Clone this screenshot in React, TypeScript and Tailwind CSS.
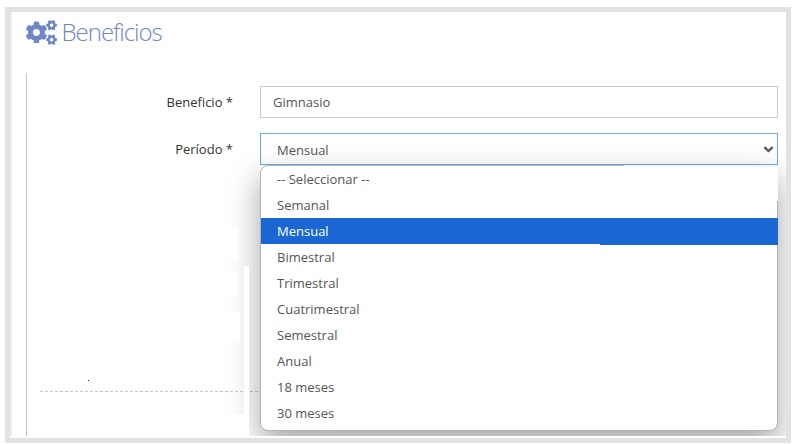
import { FaCogs } from 'react-icons/fa';

interface Option {
  value: string;
  label: string;
}

const periods: Option[] = [
  { value: '', label: '-- Seleccionar --' },
  { value: 'semanal', label: 'Semanal' },
  { value: 'mensual', label: 'Mensual' },
  { value: 'bimestral', label: 'Bimestral' },
  { value: 'trimestral', label: 'Trimestral' },
  { value: 'cuatrimestral', label: 'Cuatrimestral' },
  { value: 'semestral', label: 'Semestral' },
  { value: 'anual', label: 'Anual' },
  { value: '18', label: '18 meses' },
  { value: '30', label: '30 meses' },
];

// White areas that break up the menu's shadow and border
const patches = [
  'left-[363px] top-[-1px] h-9 w-[154px] border-t-2 border-[#f6f6f6]',
  'left-[-17px] top-[100px] h-[172px] w-[5px]',
  'left-[-46px] top-[61px] h-[33px] w-[23px]',
  'left-[-41px] top-[106px] h-[25px] w-[18px]',
  'left-[-46px] top-[146px] h-[31px] w-[25px]',
  'left-[-46px] top-[248px] h-[24px] w-[34px]',
];

function PeriodMenu({ selected }: { selected: string }) {
  return (
    <div className="absolute -left-px top-[31px] z-10 h-[266px] w-[518px] rounded-lg border border-[#b3b3b3] bg-white shadow-[0_13px_32px_rgba(0,0,0,0.36)]">
      {patches.map((patch) => (
        <div key={patch} className={`absolute bg-white ${patch}`} />
      ))}
      <ul className="relative">
        {periods.map((period) => (
          <li
            key={period.value}
            className={`relative flex h-[26px] items-center pl-4 ${
              period.value === selected ? '-mr-px bg-[#1a67d4] text-white' : 'text-[#555]'
            }`}
          >
            {period.label}
            {period.value === selected && (
              <div className="absolute right-0 top-full h-px w-[178px] bg-[#1a67d4]" />
            )}
          </li>
        ))}
      </ul>
    </div>
  );
}

export default function App() {
  return (
    <div className="h-[444px] w-[796px] bg-white pl-[5px] pt-[7px] font-['Open_Sans',sans-serif] text-[13px] leading-5">
      <div className="h-[436px] w-[786px] border-5 border-[#e2e2e2] pb-0.5">
        <div className="h-full overflow-hidden border-l-2 border-[#ebebeb]">
          <h1 className="flex h-[42px] items-center pl-[14px] text-[#6f86c4]">
            <FaCogs className="-mt-[2px] h-[25px] w-[31px]" />
            <span className="-mt-[2px] ml-[4.5px] text-[24px] font-light tracking-[-1px]">Beneficios</span>
          </h1>

          <div className="ml-[14px] mt-[19px] h-[363px] border-l border-[#c6c6c6] pt-[13px]">
            <div className="flex h-8">
              <label className="w-[206px] pt-[6px] text-right text-[#333]">Beneficio *</label>
              <div className="ml-[27px] flex w-[518px] items-center border border-[#c8c8c8] pl-3 text-[#555]">
                Gimnasio
              </div>
            </div>

            <div className="mt-[15px] flex h-8">
              <label className="w-[206px] pt-[6px] text-right text-[#333]">Período *</label>
              <div className="relative ml-[27px] flex w-[518px] items-center border border-[#66afe9] pl-4 pt-0.5 text-[#555]">
                Mensual
                <svg className="-mt-[2px] ml-auto mr-[3px] h-[7px] w-[11px]" viewBox="0 0 11 7" fill="none">
                  <path d="M1.4 1.2L5.5 5L9.6 1.2" stroke="#555" strokeWidth="2.3" />
                </svg>
                <PeriodMenu selected="mensual" />
              </div>
            </div>

            <div className="ml-[61px] mt-[215px] size-px bg-[#10205f]" />
            <svg className="ml-[13px] mt-[10px] h-px w-[738px]">
              <line x1="0" y1="0.5" x2="738" y2="0.5" stroke="#c8c8c8" strokeDasharray="3 2" />
            </svg>
          </div>
        </div>
      </div>
    </div>
  );
}
